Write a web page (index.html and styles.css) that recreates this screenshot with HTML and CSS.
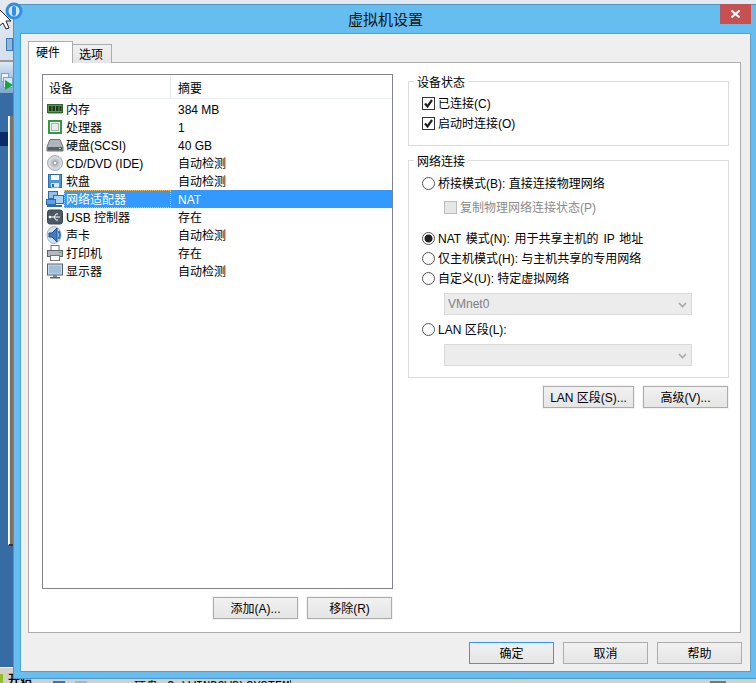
FILE: index.html
```html
<!DOCTYPE html>
<html lang="zh">
<head>
<meta charset="utf-8">
<title>虚拟机设置</title>
<link rel="stylesheet" href="styles.css">
</head>
<body>
<div class="desktop">
  <div class="bg-top"></div>
  <div class="bg-band"></div>
  <svg class="bg-toolbar" width="13" height="54" viewBox="0 0 13 54"><rect x="6.5" y="1.5" width="6" height="12" fill="#8fb8e0" stroke="#3f78b5"/><rect x="1.5" y="36.5" width="7" height="8" fill="#eaf4fc" stroke="#6fa6d8"/><rect x="3.5" y="40.5" width="9" height="10" fill="#d6e8f8" stroke="#6fa6d8"/><path d="M5 43 L13 48 L5 53Z" fill="#12a83a"/></svg>
  <div class="bg-panel"></div>
  <div class="bg-navy"></div>
  <div class="taskbar">
    <span class="task-flag"></span>
    <span class="task-start">开始</span>
    <span class="task-ico task-ico-a"></span>
    <span class="task-ico task-ico-b"></span>
    <span class="task-item">硬盘</span>
    <span class="task-path">C:\WINDOWS\SYSTEM&gt;</span>
    <span class="task-sep"></span>
    <span class="task-ico task-ico-c"></span>
  </div>

  <div class="window">
    <div class="titlebar">虚拟机设置</div>
    <div class="close"><svg width="9" height="8" viewBox="0 0 9 8"><path d="M0.5 0.5 L8.5 7.5 M8.5 0.5 L0.5 7.5" stroke="#fff" stroke-width="2"/></svg></div>
    <div class="client">
      <div class="tabs">
        <div class="tab tab-active">硬件</div>
        <div class="tab">选项</div>
      </div>
      <div class="pane">
        <div class="left">
          <div class="list">
            <div class="list-head"><div class="head-name">设备</div><div class="head-sum">摘要</div></div>
            <div class="row">
              <svg class="ico" width="18" height="16" viewBox="0 0 18 16"><rect x="1.5" y="3.5" width="15" height="8" fill="#55a04e" stroke="#2c6a2a"/><rect x="3" y="5" width="2.5" height="5" fill="#26331f"/><rect x="6.5" y="5" width="2.5" height="5" fill="#26331f"/><rect x="10" y="5" width="2.5" height="5" fill="#26331f"/><rect x="13.5" y="5" width="2" height="5" fill="#26331f"/><path d="M2 12.5h14" stroke="#c9b45a"/></svg>
              <div class="name">内存</div><div class="sum">384 MB</div>
            </div>
            <div class="row">
              <svg class="ico" width="18" height="16" viewBox="0 0 18 16"><rect x="3" y="2" width="12" height="12" fill="#eef2ea" stroke="#2f9a4c" stroke-width="2"/><rect x="5.5" y="4.5" width="7" height="7" fill="#e9ece6" stroke="#a9b4a9"/></svg>
              <div class="name">处理器</div><div class="sum">1</div>
            </div>
            <div class="row">
              <svg class="ico" width="18" height="16" viewBox="0 0 18 16"><path d="M4 2.5h10l3 7.5v4H1v-4z" fill="#aeb6bc" stroke="#6d767c"/><rect x="1.5" y="10" width="15" height="3.5" fill="#56606a"/><rect x="13" y="11" width="2" height="1" fill="#8fe08f"/></svg>
              <div class="name">硬盘(SCSI)</div><div class="sum">40 GB</div>
            </div>
            <div class="row">
              <svg class="ico" width="18" height="16" viewBox="0 0 18 16"><circle cx="9" cy="8" r="7.5" fill="#d5d9dd" stroke="#a7adb3"/><circle cx="9" cy="8" r="4.5" fill="#bfc5cb"/><circle cx="9" cy="8" r="2" fill="#fff" stroke="#8a9096"/></svg>
              <div class="name">CD/DVD (IDE)</div><div class="sum">自动检测</div>
            </div>
            <div class="row">
              <svg class="ico" width="18" height="16" viewBox="0 0 18 16"><rect x="2.5" y="1.5" width="13" height="13" fill="#4a98dc" stroke="#2a6cae"/><rect x="5" y="2" width="8" height="5" fill="#fff"/><rect x="5" y="10" width="8" height="4.5" fill="#dfe8f0"/><rect x="6" y="11" width="2" height="3" fill="#2f6fa8"/></svg>
              <div class="name">软盘</div><div class="sum">自动检测</div>
            </div>
            <div class="row row-sel">
              <svg class="ico" width="18" height="16" viewBox="0 0 18 16"><rect x="2.5" y="0.5" width="9" height="7" fill="#8ec1ee" stroke="#2d6cb0"/><rect x="7.5" y="4.5" width="10" height="8" fill="#a8d3f5" stroke="#2d6cb0"/><rect x="0.5" y="8.5" width="9" height="5" fill="#5f9fdc" stroke="#2d6cb0"/><path d="M1 15h15" stroke="#2d6cb0" stroke-width="2"/></svg>
              <div class="name name-sel">网络适配器</div><div class="sum">NAT</div>
            </div>
            <div class="row">
              <svg class="ico" width="18" height="16" viewBox="0 0 18 16"><rect x="1.5" y="1" width="15" height="14" rx="2.5" fill="#4d5a66" stroke="#39444e"/><path d="M4 8h10M8 8l2-3h2M8 8l2 3h2" stroke="#fff" fill="none"/><circle cx="4" cy="8" r="1.3" fill="#fff"/></svg>
              <div class="name">USB 控制器</div><div class="sum">存在</div>
            </div>
            <div class="row">
              <svg class="ico" width="18" height="18" viewBox="0 0 18 18"><ellipse cx="8" cy="9" rx="7" ry="8.5" fill="#cfe0f0" stroke="#9fb6cc"/><path d="M3 7h3l5-5v14l-5-5H3z" fill="#3f7fc0" stroke="#1f4f86"/><path d="M12.5 5q2.5 4 0 8" stroke="#2f6fb0" stroke-width="2" fill="none"/></svg>
              <div class="name">声卡</div><div class="sum">自动检测</div>
            </div>
            <div class="row">
              <svg class="ico" width="18" height="16" viewBox="0 0 18 16"><rect x="5" y="0.5" width="8" height="5" fill="#fff" stroke="#70757a"/><rect x="1.5" y="5.5" width="15" height="6" fill="#b4b8bc" stroke="#5f6468"/><rect x="4.5" y="10.5" width="9" height="5" fill="#fff" stroke="#70757a"/><rect x="13" y="7" width="2" height="1" fill="#3fc04f"/></svg>
              <div class="name">打印机</div><div class="sum">存在</div>
            </div>
            <div class="row">
              <svg class="ico" width="18" height="16" viewBox="0 0 18 16"><rect x="1.5" y="1" width="15" height="11" fill="#c7dbea" stroke="#56636e"/><rect x="3" y="2.5" width="12" height="8" fill="#9fc0d8"/><rect x="7" y="12" width="4" height="2" fill="#7b868e"/><rect x="4" y="14" width="10" height="1.5" fill="#56636e"/></svg>
              <div class="name">显示器</div><div class="sum">自动检测</div>
            </div>
          </div>
          <div class="btn-row btn-row-list">
            <div class="btn btn-add">添加(A)...</div>
            <div class="btn btn-add">移除(R)</div>
          </div>
        </div>
        <div class="right">
          <div class="group group-state">
            <span class="group-label">设备状态</span>
            <div class="opt"><span class="check"><svg width="11" height="11" viewBox="0 0 11 11"><path d="M2 5.5 L4.5 8.5 L9 2" stroke="#222" stroke-width="2.2" fill="none"/></svg></span>已连接(C)</div>
            <div class="opt"><span class="check"><svg width="11" height="11" viewBox="0 0 11 11"><path d="M2 5.5 L4.5 8.5 L9 2" stroke="#222" stroke-width="2.2" fill="none"/></svg></span>启动时连接(O)</div>
          </div>
          <div class="group group-net">
            <span class="group-label">网络连接</span>
            <div class="opt"><span class="radio"></span>桥接模式(B): 直接连接物理网络</div>
            <div class="opt opt-sub"><span class="check check-off"></span>复制物理网络连接状态(P)</div>
            <div class="opt opt-nat"><span class="radio radio-on"></span>NAT 模式(N): 用于共享主机的 IP 地址</div>
            <div class="opt"><span class="radio"></span>仅主机模式(H): 与主机共享的专用网络</div>
            <div class="opt"><span class="radio"></span>自定义(U): 特定虚拟网络</div>
            <div class="select">VMnet0<svg class="chev" width="9" height="6" viewBox="0 0 9 6"><path d="M1 1 L4.5 4.5 L8 1" stroke="#a8a8a8" stroke-width="1.6" fill="none"/></svg></div>
            <div class="opt opt-lan"><span class="radio"></span>LAN 区段(L):</div>
            <div class="select"><svg class="chev" width="9" height="6" viewBox="0 0 9 6"><path d="M1 1 L4.5 4.5 L8 1" stroke="#a8a8a8" stroke-width="1.6" fill="none"/></svg></div>
          </div>
          <div class="btn-row btn-row-net">
            <div class="btn btn-lan">LAN 区段(S)...</div>
            <div class="btn btn-adv">高级(V)...</div>
          </div>
        </div>
      </div>
      <div class="footer">
        <div class="btn btn-foot btn-default">确定</div>
        <div class="btn btn-foot">取消</div>
        <div class="btn btn-foot">帮助</div>
      </div>
    </div>
  </div>

  <svg class="app-ring" width="18" height="18" viewBox="0 0 18 18"><circle cx="9" cy="9" r="7" fill="#cfe6f8" stroke="#2f8fe0" stroke-width="3"/><rect x="7" y="4" width="4" height="10" rx="2" fill="#2f8fe0"/></svg>
  <svg class="cursor" width="12" height="22" viewBox="0 0 12 22"><path d="M-2 0 L11 13 L6 13 L9 20 L6 21 L3 15 L-2 19Z" fill="#fff" stroke="#222"/></svg>
</div>
</body>
</html>
```

FILE: styles.css
```css
* { box-sizing: border-box; }
html, body { margin: 0; padding: 0; }
body { width: 756px; height: 683px; overflow: hidden; font: 12px/16px "Liberation Sans", "Noto Sans CJK SC", sans-serif; color: #000; }

.desktop { position: relative; width: 756px; height: 683px; overflow: hidden; background: #376ba3; }
.bg-top { position: absolute; left: 0; top: 0; width: 756px; height: 60px; background: linear-gradient(#e4eaf2, #d4e0ee); }
.bg-band { position: absolute; left: 0; top: 60px; width: 13px; height: 33px; background: linear-gradient(#dce8f4, #7ea6cf); border-top: 2px solid #9a9a9a; }
.bg-toolbar { position: absolute; left: 0; top: 37px; }
.bg-panel { position: absolute; left: 8px; top: 116px; width: 5px; height: 430px; background: #e9e7e0; border-left: 1px solid #fff; border-bottom: 2px solid #333; box-shadow: inset -3px 0 0 #77736c; }
.bg-navy { position: absolute; left: 0; top: 132px; width: 8px; height: 14px; background: #0c2a66; }
.taskbar { position: absolute; left: 0; top: 667px; width: 756px; height: 16px; background: #d4d0c8; border-top: 1px solid #f4f2ec; }
.task-flag { position: absolute; left: 0; top: 6px; width: 3px; height: 9px; background: #8fbf2a; }
.task-start { position: absolute; left: 8px; top: 4px; font-weight: bold; }
.task-ico { position: absolute; top: 13px; width: 12px; height: 4px; background: #2f78c4; }
.task-ico-a { left: 53px; }
.task-ico-b { left: 75px; background: #8fbbe6; }
.task-ico-c { left: 710px; width: 16px; background: #6a7f6a; }
.task-item { position: absolute; left: 134px; top: 11px; }
.task-path { position: absolute; left: 167px; top: 11px; font-family: "Liberation Mono", monospace; }
.task-sep { position: absolute; left: 290px; top: 12px; width: 1px; height: 4px; background: #444; }

.window { position: absolute; left: 13px; top: 4px; width: 743px; height: 675px; background: #65bdf0; border: 1px solid #4c95c4; border-right: 0; display: flex; flex-direction: column; padding: 0 5px 6px 6px; }
.titlebar { height: 28px; flex: none; font-size: 15px; line-height: 30px; text-align: center; color: #111; }
.close { position: absolute; right: 5px; top: -1px; width: 31px; height: 20px; background: #c75050; display: flex; align-items: center; justify-content: center; }
.client { flex: 1; background: #efefef; border: 1px solid #569ecb; display: flex; flex-direction: column; padding: 7px; }

.tabs { display: flex; align-items: flex-end; height: 22px; flex: none; position: relative; z-index: 1; margin-bottom: -1px; }
.tab { width: 39px; height: 19px; background: linear-gradient(#f0f0f0, #e5e5e5); border: 1px solid #acacac; border-bottom: 0; border-left: 0; padding-right: 2px; text-align: center; line-height: 20px; }
.tab-active { width: 45px; height: 22px; background: #fff; border-left: 1px solid #acacac; padding-right: 5px; line-height: 22px; }

.pane { flex: none; width: 713px; height: 571px; background: #fff; border: 1px solid #acacac; display: flex; gap: 15px; padding: 11px 11px 11px 13px; }
.left { width: 351px; flex: none; display: flex; flex-direction: column; }
.list { height: 515px; flex: none; border: 1px solid #82828c; }
.list-head { height: 24px; display: flex; line-height: 29px; border-bottom: 1px solid #e8eef4; margin-bottom: 1px; }
.head-name { width: 128px; padding-left: 6px; border-right: 1px solid #e3e9f0; }
.head-sum { padding-left: 7px; }
.row { display: flex; align-items: center; height: 18px; }
.ico { flex: none; margin-left: 3px; }
.name { width: 107px; flex: none; padding-left: 2px; height: 18px; line-height: 20px; white-space: nowrap; }
.sum { padding-left: 7px; flex: 1; height: 18px; line-height: 20px; white-space: nowrap; }
.row-sel .sum, .row-sel .name { background: #3399ff; color: #fff; }
.name-sel { outline: 1px dotted #f0c060; outline-offset: -1px; }

.btn { height: 22px; padding-top: 2px; background: linear-gradient(#f1f1f1, #e5e5e5); border: 1px solid #acacac; box-shadow: 0 0 0 1px #f3f3f3; display: flex; align-items: center; justify-content: center; white-space: nowrap; }
.btn-row { display: flex; justify-content: flex-end; gap: 9px; margin-right: 1px; }
.btn-row-list { margin-top: 8px; }
.btn-add { width: 85px; }

.right { width: 321px; flex: none; padding-top: 7px; }
.group { position: relative; border: 1px solid #dcdcdc; padding: 11px 0 0 13px; }
.group-state { height: 65px; margin-bottom: 14px; }
.group-net { height: 218px; padding-top: 12px; }
.group-label { position: absolute; left: 5px; top: -7px; padding: 0 3px; background: #fff; }
.opt { height: 20px; padding-top: 2px; display: flex; align-items: center; gap: 3px; white-space: nowrap; }
.opt-sub { margin: 4px 0 0 22px; color: #8a8a8a; }
.opt-nat { margin-top: 11px; word-spacing: 1.5px; }
.opt-lan { margin-top: 4px; }
.check { width: 13px; height: 13px; margin-top: -2px; flex: none; border: 1px solid #333; background: #fff; display: flex; align-items: center; justify-content: center; }
.check-off { background: #e6e6e6; border-color: #bcbcbc; }
.radio { width: 13px; height: 13px; margin-top: -2px; flex: none; border: 1px solid #555; border-radius: 50%; background: #fff; }
.radio-on { background: radial-gradient(circle, #222 0, #222 3.6px, #fff 4.4px); }
.select { position: relative; margin: 5px 0 0 22px; width: 248px; height: 22px; background: #ececec; border: 1px solid #d9d9d9; padding-left: 3px; line-height: 21px; color: #808080; }
.chev { position: absolute; right: 4px; top: 8px; }
.btn-row-net { margin-top: 8px; }
.btn-lan { width: 91px; }
.btn-adv { width: 85px; }

.footer { display: flex; justify-content: flex-end; gap: 9px; margin-top: 9px; margin-right: 1px; }
.btn-foot { width: 85px; box-shadow: none; }
.btn-default { border-color: #3399ff; }

.app-ring { position: absolute; left: 5px; top: 2px; }
.cursor { position: absolute; left: 0; top: 8px; }
```
